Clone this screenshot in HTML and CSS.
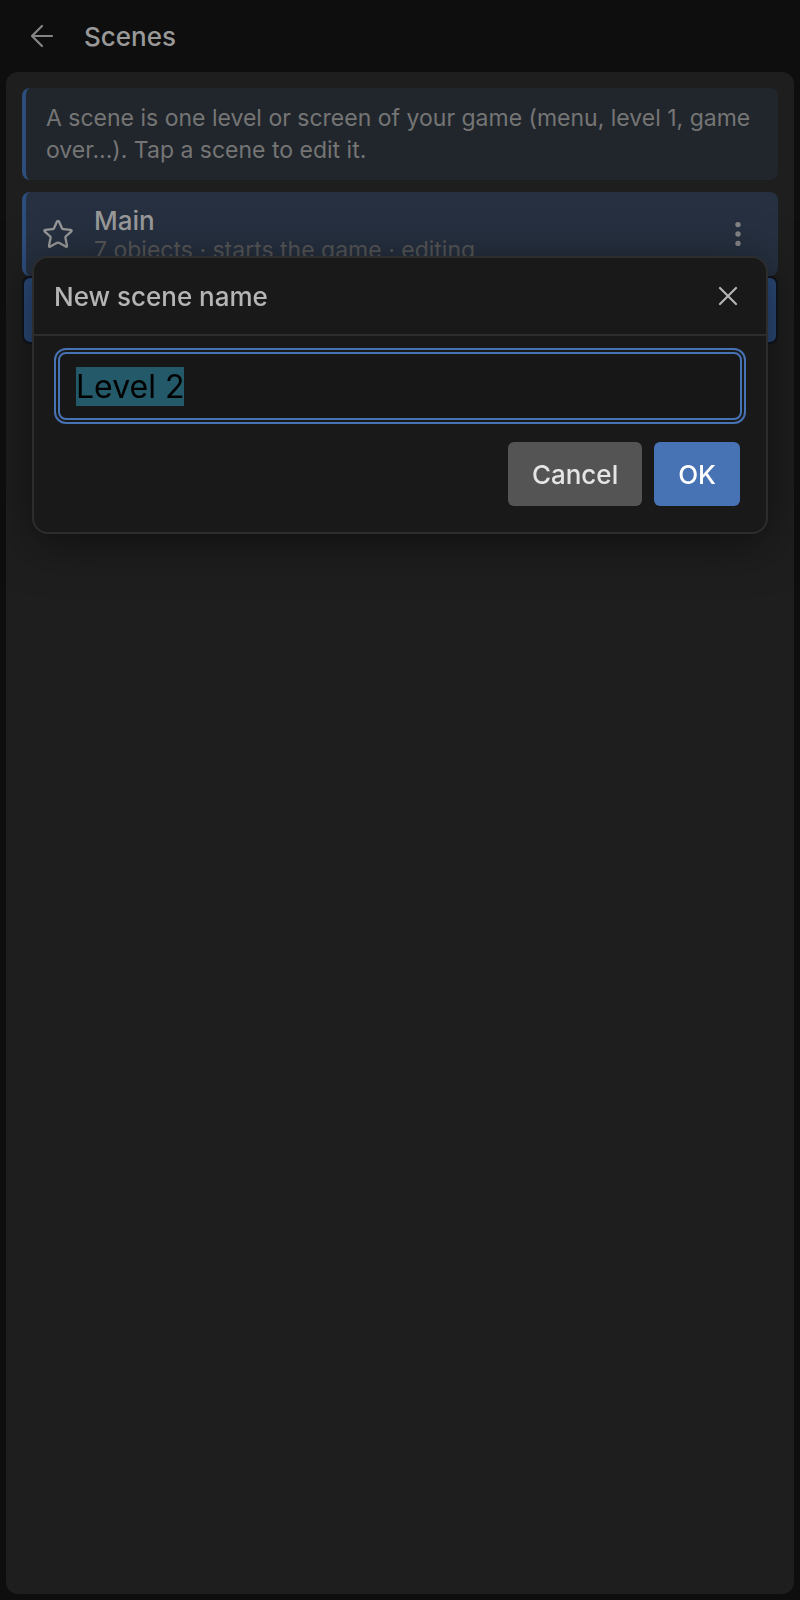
FILE: index.html
```html
<!DOCTYPE html>
<html lang="en">
<head>
<meta charset="utf-8">
<meta name="viewport" content="width=device-width, initial-scale=1">
<title>Scenes</title>
<link rel="stylesheet" href="styles.css">
</head>
<body>
<div class="app">
  <header class="topbar">
    <button class="icon-button" type="button" aria-label="Back">
      <svg width="24" height="24" viewBox="0 0 24 24"><path d="M22 12H2M12 2 2 12l10 10"/></svg>
    </button>
    <h1 class="topbar-title">Scenes</h1>
  </header>
  <main class="panel">
    <p class="hint">A scene is one level or screen of your game (menu, level 1, game over...). Tap a scene to edit it.</p>
    <div class="scene">
      <svg class="scene-star" width="32" height="32" viewBox="0 0 32 32"><path d="M16 2.8 Q16.700 2.8 17.100 3.700 L20 10.300 Q20.300 11 21.100 11.100 L28.600 11.900 Q30.400 12.200 29.100 13.600 L23.700 18.500 Q23.200 19 23.400 19.800 L25 27.700 Q25.200 29.300 23.700 28.600 L16.900 24.800 Q16 24.300 15.100 24.800 L8.300 28.600 Q6.800 29.300 7 27.700 L8.600 19.800 Q8.800 19 8.300 18.500 L2.900 13.600 Q1.600 12.200 3.400 11.900 L10.900 11.100 Q11.700 11 12 10.300 L14.900 3.700 Q15.300 2.800 16 2.800 Z"/></svg>
      <div class="scene-text">
        <div class="scene-name">Main</div>
        <div class="scene-meta">7 objects · starts the game · editing</div>
      </div>
      <button class="icon-button" type="button" aria-label="Scene menu">
        <svg class="dots" width="8" height="28" viewBox="0 0 8 28"><circle cx="4" cy="4.600" r="2.700"/><circle cx="4" cy="14" r="2.700"/><circle cx="4" cy="23.400" r="2.700"/></svg>
      </button>
    </div>
    <button class="add-scene" type="button" aria-label="Add scene"></button>
  </main>
</div>
<div class="overlay">
  <form class="dialog" role="dialog" aria-modal="true" aria-labelledby="dialog-title">
    <div class="dialog-header">
      <label class="dialog-title" id="dialog-title" for="scene-name">New scene name</label>
      <button class="icon-button close" type="button" aria-label="Close">
        <svg width="20" height="20" viewBox="0 0 20 20"><path d="m2 2 16 16M18 2 2 18"/></svg>
      </button>
    </div>
    <div class="dialog-body">
      <input class="name-input" id="scene-name" type="text" value="Level 2" spellcheck="false" autocomplete="off">
      <div class="actions">
        <button class="button" type="button">Cancel</button>
        <button class="button primary" type="submit">OK</button>
      </div>
    </div>
  </form>
</div>
<script src="script.js"></script>
</body>
</html>
```
FILE: styles.css
```css
* {
  box-sizing: border-box;
}

body {
  margin: 0;
  background: #0e0e0e;
  color: #999;
  font-family: Inter, "Liberation Sans", sans-serif;
  font-size: 26px;
  line-height: 32px;
}

button,
input {
  font: inherit;
}

.app {
  display: flex;
  flex-direction: column;
  min-height: 100vh;
  padding: 0 6px 6px;
}

.topbar {
  display: flex;
  align-items: center;
  gap: 22px;
  height: 72px;
  padding: 0 16px;
}

.topbar-title {
  margin: 0;
  padding-top: 2px;
  font-size: 26px;
  font-weight: 500;
}

.icon-button {
  display: grid;
  place-items: center;
  width: 40px;
  height: 48px;
  padding: 0;
  border: 0;
  background: none;
  color: #858585;
}

.icon-button svg {
  fill: none;
  stroke: currentColor;
  stroke-width: 2.2;
  stroke-linecap: round;
  stroke-linejoin: round;
}

.icon-button .dots {
  fill: currentColor;
  stroke: none;
}

.panel {
  display: flex;
  flex: 1;
  flex-direction: column;
  padding: 16px;
  border-radius: 12px;
  background: #1e1e1e;
}

.hint {
  margin: 0 0 12px;
  padding: 14px 20px;
  border-left: 4px solid #2d4e7d;
  border-radius: 8px;
  background: #21262c;
  color: #757575;
  font-size: 23px;
}

.scene {
  display: flex;
  align-items: center;
  min-height: 84px;
  padding: 0 20px 0 16px;
  border-left: 4px solid #2d4e7d;
  border-radius: 8px;
  background: #263040;
}

.scene-star {
  fill: none;
  stroke: #999;
  stroke-width: 2.3;
}

.scene-text {
  flex: 1;
  margin-left: 20px;
  padding-top: 2px;
}

.scene-name {
  font-weight: 500;
  line-height: 30px;
}

.scene-meta {
  color: #585858;
  font-size: 23px;
  line-height: 28px;
}

.add-scene {
  height: 68px;
  border: 2px solid #10141c;
  border-radius: 8px;
  background: #2b4a78;
}

.overlay {
  position: fixed;
  inset: 0;
  padding: 16vh 32px 0;
}

.dialog {
  border: 2px solid #2d2d2d;
  border-radius: 16px;
  background: #191919;
  box-shadow: 0 8px 48px rgba(0, 0, 0, 0.5);
}

.dialog-header {
  display: flex;
  align-items: center;
  justify-content: space-between;
  height: 78px;
  padding: 0 18px 0 20px;
  border-bottom: 2px solid #2d2d2d;
}

.dialog-title {
  padding-top: 2px;
  color: #b5b5b5;
  font-weight: 500;
}

.close {
  color: #b5b5b5;
}

.dialog-body {
  padding: 16px 24px 26px;
}

.name-input {
  display: block;
  width: 100%;
  height: 68px;
  padding: 0 16px;
  border: 2px solid #4772b3;
  border-radius: 8px;
  outline: 2px solid #4772b3;
  outline-offset: 2px;
  background: #171717;
  color: #000;
  font-size: 32px;
  line-height: 40px;
}

.name-input::selection {
  background: #235969;
  color: #000;
}

.actions {
  display: flex;
  justify-content: flex-end;
  gap: 12px;
  margin-top: 22px;
  padding-right: 2px;
}

.button {
  height: 64px;
  padding: 2px 24px 0;
  border: 0;
  border-radius: 6px;
  background: #545454;
  color: #e5e5e5;
  font-weight: 500;
}

.primary {
  background: #4772b3;
  color: #fff;
}
```
FILE: script.js
```
const nameInput = document.getElementById("scene-name");
nameInput.focus();
nameInput.select();
```
